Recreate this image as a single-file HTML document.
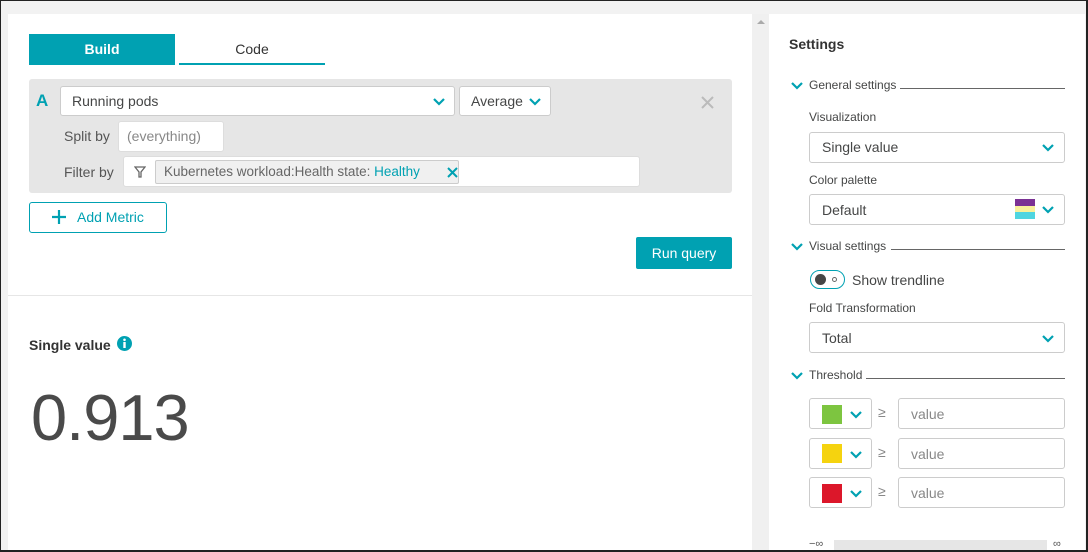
<!DOCTYPE html>
<html><head><style>
*{box-sizing:border-box;margin:0;padding:0}
body{width:1088px;height:552px;position:relative;background:#f2f2f2;font-family:"Liberation Sans",sans-serif;color:#454646;overflow:hidden;font-size:14px}
.a{position:absolute}
.box{position:absolute;background:#fff;border:1px solid #ccc;border-radius:3px}
.chev{position:absolute;width:14px;height:9px}
.t{position:absolute;white-space:nowrap}
</style></head><body>
<div class="a" style="left:0;top:0;width:1088px;height:552px;border:1px solid #222;border-width:1px 2px 2px 1px;z-index:10;pointer-events:none"></div>
<div class="a" style="left:8px;top:14px;width:744px;height:538px;background:#fff"></div>
<div class="a" style="left:752px;top:14px;width:17px;height:538px;background:#f0f0f0"></div>
<div class="a" style="left:757px;top:20px;width:0;height:0;border:4px solid transparent;border-bottom-color:#aaa;border-top:0"></div>
<div class="a" style="left:769px;top:14px;width:316px;height:538px;background:#fff"></div>
<div class="a" style="left:8px;top:295px;width:744px;height:1px;background:#e6e6e6"></div>

<div class="a" style="left:29px;top:34px;width:146px;height:31px;background:#00a1b2;color:#fff;font-weight:bold;text-align:center;line-height:31px">Build</div>
<div class="a" style="left:179px;top:34px;width:146px;height:31px;border-bottom:2px solid #00a1b2;text-align:center;line-height:30px;color:#333">Code</div>

<div class="a" style="left:29px;top:79px;width:703px;height:114px;background:#e6e6e6;border-radius:3px"></div>
<div class="t" style="left:36px;top:91px;color:#00a1b2;font-size:17px;font-weight:bold">A</div>
<div class="box" style="left:60px;top:86px;width:395px;height:30px"></div>
<div class="t" style="left:72px;top:93px">Running pods</div>
<svg class="chev" style="left:432px;top:97px" viewBox="0 0 14 9"><path d="M2 2l5 5 5-5" stroke="#00a1b2" stroke-width="2.2" fill="none"/></svg>
<div class="box" style="left:459px;top:86px;width:92px;height:30px"></div>
<div class="t" style="left:471px;top:93px">Average</div>
<svg class="chev" style="left:528px;top:97px" viewBox="0 0 14 9"><path d="M2 2l5 5 5-5" stroke="#00a1b2" stroke-width="2.2" fill="none"/></svg>
<svg class="a" style="left:701px;top:96px" width="13" height="13" viewBox="0 0 13 13"><path d="M1 1l11 11M12 1L1 12" stroke="#bbb" stroke-width="2"/></svg>
<div class="t" style="left:64px;top:128px;color:#555">Split by</div>
<div class="box" style="left:118px;top:121px;width:106px;height:31px;border-color:#ddd"></div>
<div class="t" style="left:127px;top:128px;color:#888">(everything)</div>
<div class="t" style="left:64px;top:164px;color:#555">Filter by</div>
<div class="box" style="left:123px;top:156px;width:517px;height:31px;border-color:#ddd"></div>
<svg class="a" style="left:134px;top:166px" width="12" height="12" viewBox="0 0 12 12"><path d="M1 1h10L7 6v5H5V6z" fill="none" stroke="#666" stroke-width="1.3"/></svg>
<div class="a" style="left:155px;top:160px;width:304px;height:24px;background:#f0f0f0;border:1px solid #ccc;border-radius:2px"></div>
<div class="t" style="left:164px;top:164px;font-size:13.5px;color:#666">Kubernetes workload:Health state: <span style="color:#00a1b2">Healthy</span></div>
<svg class="a" style="left:447px;top:167px" width="11" height="11" viewBox="0 0 11 11"><path d="M1 1l9 9M10 1L1 10" stroke="#00a1b2" stroke-width="2"/></svg>

<div class="a" style="left:29px;top:202px;width:138px;height:31px;border:1px solid #00a1b2;border-radius:3px"></div>
<svg class="a" style="left:51px;top:209px" width="16" height="16" viewBox="0 0 16 16"><path d="M8 1v14M1 8h14" stroke="#00a1b2" stroke-width="2.2"/></svg>
<div class="t" style="left:77px;top:209px;color:#00a1b2">Add Metric</div>
<div class="a" style="left:636px;top:237px;width:96px;height:32px;background:#00a1b2;color:#fff;border-radius:2px;text-align:center;line-height:32px">Run query</div>

<div class="t" style="left:29px;top:337px;font-weight:bold;font-size:14px;color:#333">Single value</div>
<svg class="a" style="left:117px;top:336px" width="15" height="15" viewBox="0 0 15 15"><circle cx="7.5" cy="7.5" r="7.5" fill="#00a1b2"/><rect x="6.3" y="6" width="2.4" height="6" fill="#fff"/><circle cx="7.5" cy="3.8" r="1.3" fill="#fff"/></svg>
<div class="t" style="left:31px;top:378px;font-size:65px;line-height:80px;color:#4a4a4a;letter-spacing:-1px">0.913</div>

<div class="t" style="left:789px;top:36px;font-weight:bold;font-size:14px;color:#333">Settings</div>
<svg class="chev" style="left:790px;top:81px" viewBox="0 0 14 9"><path d="M2 2l5 5 5-5" stroke="#00a1b2" stroke-width="2.2" fill="none"/></svg>
<div class="t" style="left:809px;top:78px;font-size:12px">General settings</div>
<div class="a" style="left:900px;top:88px;width:165px;height:1px;background:#666"></div>
<div class="t" style="left:809px;top:110px;font-size:12px">Visualization</div>
<div class="box" style="left:809px;top:132px;width:256px;height:31px"></div>
<div class="t" style="left:822px;top:139px">Single value</div>
<svg class="chev" style="left:1041px;top:143px" viewBox="0 0 14 9"><path d="M2 2l5 5 5-5" stroke="#00a1b2" stroke-width="2.2" fill="none"/></svg>
<div class="t" style="left:809px;top:173px;font-size:12px">Color palette</div>
<div class="box" style="left:809px;top:194px;width:256px;height:31px"></div>
<div class="t" style="left:822px;top:202px">Default</div>
<div class="a" style="left:1015px;top:199px;width:20px;height:7px;background:#7b3294"></div>
<div class="a" style="left:1015px;top:206px;width:20px;height:6px;background:#f8f09a"></div>
<div class="a" style="left:1015px;top:212px;width:20px;height:7px;background:#4fd5e0"></div>
<svg class="chev" style="left:1041px;top:205px" viewBox="0 0 14 9"><path d="M2 2l5 5 5-5" stroke="#00a1b2" stroke-width="2.2" fill="none"/></svg>
<svg class="chev" style="left:790px;top:242px" viewBox="0 0 14 9"><path d="M2 2l5 5 5-5" stroke="#00a1b2" stroke-width="2.2" fill="none"/></svg>
<div class="t" style="left:809px;top:239px;font-size:12px">Visual settings</div>
<div class="a" style="left:891px;top:249px;width:174px;height:1px;background:#666"></div>
<div class="a" style="left:810px;top:270px;width:35px;height:19px;border:1.5px solid #00a1b2;border-radius:10px"></div>
<div class="a" style="left:815px;top:274px;width:11px;height:11px;border-radius:50%;background:#454646"></div>
<div class="a" style="left:832px;top:277px;width:5px;height:5px;border-radius:50%;border:1px solid #666"></div>
<div class="t" style="left:852px;top:272px">Show trendline</div>
<div class="t" style="left:809px;top:301px;font-size:12px">Fold Transformation</div>
<div class="box" style="left:809px;top:322px;width:256px;height:31px"></div>
<div class="t" style="left:822px;top:330px">Total</div>
<svg class="chev" style="left:1041px;top:334px" viewBox="0 0 14 9"><path d="M2 2l5 5 5-5" stroke="#00a1b2" stroke-width="2.2" fill="none"/></svg>
<svg class="chev" style="left:790px;top:371px" viewBox="0 0 14 9"><path d="M2 2l5 5 5-5" stroke="#00a1b2" stroke-width="2.2" fill="none"/></svg>
<div class="t" style="left:809px;top:368px;font-size:12px">Threshold</div>
<div class="a" style="left:866px;top:378px;width:199px;height:1px;background:#666"></div>

<div class="box" style="left:809px;top:398px;width:63px;height:31px"></div>
<div class="a" style="left:822px;top:405px;width:20px;height:19px;background:#7dc540"></div>
<svg class="chev" style="left:849px;top:410px" viewBox="0 0 14 9"><path d="M2 2l5 5 5-5" stroke="#00a1b2" stroke-width="2.2" fill="none"/></svg>
<div class="t" style="left:878px;top:404px;color:#888">≥</div>
<div class="box" style="left:898px;top:398px;width:167px;height:31px"></div>
<div class="t" style="left:911px;top:406px;color:#888">value</div>

<div class="box" style="left:809px;top:438px;width:63px;height:31px"></div>
<div class="a" style="left:822px;top:444px;width:20px;height:19px;background:#f5d30f"></div>
<svg class="chev" style="left:849px;top:450px" viewBox="0 0 14 9"><path d="M2 2l5 5 5-5" stroke="#00a1b2" stroke-width="2.2" fill="none"/></svg>
<div class="t" style="left:878px;top:444px;color:#888">≥</div>
<div class="box" style="left:898px;top:438px;width:167px;height:31px"></div>
<div class="t" style="left:911px;top:446px;color:#888">value</div>

<div class="box" style="left:809px;top:477px;width:63px;height:31px"></div>
<div class="a" style="left:822px;top:484px;width:20px;height:19px;background:#dc172a"></div>
<svg class="chev" style="left:849px;top:489px" viewBox="0 0 14 9"><path d="M2 2l5 5 5-5" stroke="#00a1b2" stroke-width="2.2" fill="none"/></svg>
<div class="t" style="left:878px;top:483px;color:#888">≥</div>
<div class="box" style="left:898px;top:477px;width:167px;height:31px"></div>
<div class="t" style="left:911px;top:485px;color:#888">value</div>

<div class="t" style="left:809px;top:538px;font-size:11px;color:#555">−∞</div>
<div class="a" style="left:834px;top:540px;width:213px;height:12px;background:#e6e6e6"></div>
<div class="t" style="left:1053px;top:538px;font-size:11px;color:#555">∞</div>
</body></html>
